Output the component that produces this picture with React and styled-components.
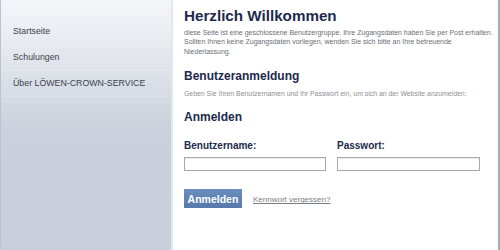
import styled, { createGlobalStyle } from "styled-components";

const Global = createGlobalStyle`
  html, body { margin: 0; padding: 0; background: #fff; }
  body { font-family: "Liberation Sans", Arial, sans-serif; }
`;

const Page = styled.div`
  display: flex;
  width: 500px;
  height: 250px;
  overflow: hidden;
`;

const Sidebar = styled.nav`
  width: 171px;
  flex-shrink: 0;
  background: linear-gradient(180deg, #f4f6f9 0px, #e2e6ec 60px, #cad1dc 130px, #c8cfda 100%);
  border-left: 1px solid #bcc3cf;
  box-sizing: border-box;
  padding-top: 19px;
  display: flex;
  flex-direction: column;
`;

const NavItem = styled.a`
  display: block;
  padding: 0 0 0 12px;
  height: 25px;
  line-height: 25px;
  font-size: 8.8px;
  color: #3b4150;
  text-decoration: none;
  border-bottom: 1px solid rgba(255, 255, 255, 0.15);
`;

const Main = styled.main`
  flex: 1;
  min-width: 0;
  background: #fff;
  border-left: 2px solid #e3e7ee;
  border-right: 2px solid #a9adb3;
  padding: 7px 6px 0 11px;
  box-sizing: border-box;
`;

const Title = styled.h1`
  margin: 0;
  font-size: 15.2px;
  line-height: 18px;
  font-weight: bold;
  color: #1b2a4d;
`;

const Heading = styled.h2`
  margin: ${(p) => p.$top}px 0 0;
  font-size: 12px;
  line-height: 15px;
  font-weight: bold;
  color: #1b2a4d;
`;

const Text = styled.p`
  margin: ${(p) => p.$top}px 0 0;
  font-size: ${(p) => p.$size}px;
  line-height: 9.3px;
  color: ${(p) => p.$color};
  white-space: nowrap;
`;

const Fields = styled.div`
  display: flex;
  gap: 11px;
  margin-top: 15px;
`;

const Field = styled.div`
  display: flex;
  flex-direction: column;
  width: ${(p) => p.$w}px;
`;

const Label = styled.label`
  font-size: 10px;
  line-height: 12px;
  font-weight: bold;
  color: #1b2a4d;
  margin-bottom: 5px;
`;

const Input = styled.input`
  box-sizing: border-box;
  height: 14px;
  width: 100%;
  margin: 0;
  border: 1px solid #a6aab0;
  box-shadow: inset 0 1px 1px rgba(0, 0, 0, 0.08);
  padding: 0 3px;
  font-size: 9px;
  outline: none;
`;

const Actions = styled.div`
  display: flex;
  align-items: center;
  gap: 11px;
  margin-top: 18px;
`;

const Button = styled.button`
  height: 19px;
  width: 58px;
  padding: 0;
  border: none;
  background: linear-gradient(180deg, #6a8fbf 0%, #5579aa 100%);
  color: #fff;
  font-family: "Liberation Sans", Arial, sans-serif;
  font-size: 10.5px;
  font-weight: bold;
  cursor: pointer;
`;

const Link = styled.a`
  font-size: 8px;
  color: #7a7e85;
  text-decoration: underline;
  margin-top: 2px;
`;

export default function App() {
  return (
    <>
      <Global />
      <Page>
        <Sidebar>
          <NavItem href="#">Startseite</NavItem>
          <NavItem href="#">Schulungen</NavItem>
          <NavItem href="#">Über LÖWEN-CROWN-SERVICE</NavItem>
        </Sidebar>
        <Main>
          <Title>Herzlich Willkommen</Title>
          <Text $top={3} $size={7.0} $color="#6a6e75">
            diese Seite ist eine geschlossene Benutzergruppe. Ihre Zugangsdaten haben Sie per Post erhalten.
            <br />
            Sollten Ihnen keine Zugangsdaten vorliegen, wenden Sie sich bitte an Ihre betreuende
            <br />
            Niederlassung.
          </Text>
          <Heading $top={13}>Benutzeranmeldung</Heading>
          <Text $top={5} $size={6.9} $color="#8c9096">
            Geben Sie Ihren Benutzernamen und Ihr Passwort ein, um sich an der Website anzumelden:
          </Text>
          <Heading $top={12}>Anmelden</Heading>
          <Fields>
            <Field $w={142}>
              <Label>Benutzername:</Label>
              <Input type="text" />
            </Field>
            <Field $w={143}>
              <Label>Passwort:</Label>
              <Input type="password" />
            </Field>
          </Fields>
          <Actions>
            <Button>Anmelden</Button>
            <Link href="#">Kennwort vergessen?</Link>
          </Actions>
        </Main>
      </Page>
    </>
  );
}
